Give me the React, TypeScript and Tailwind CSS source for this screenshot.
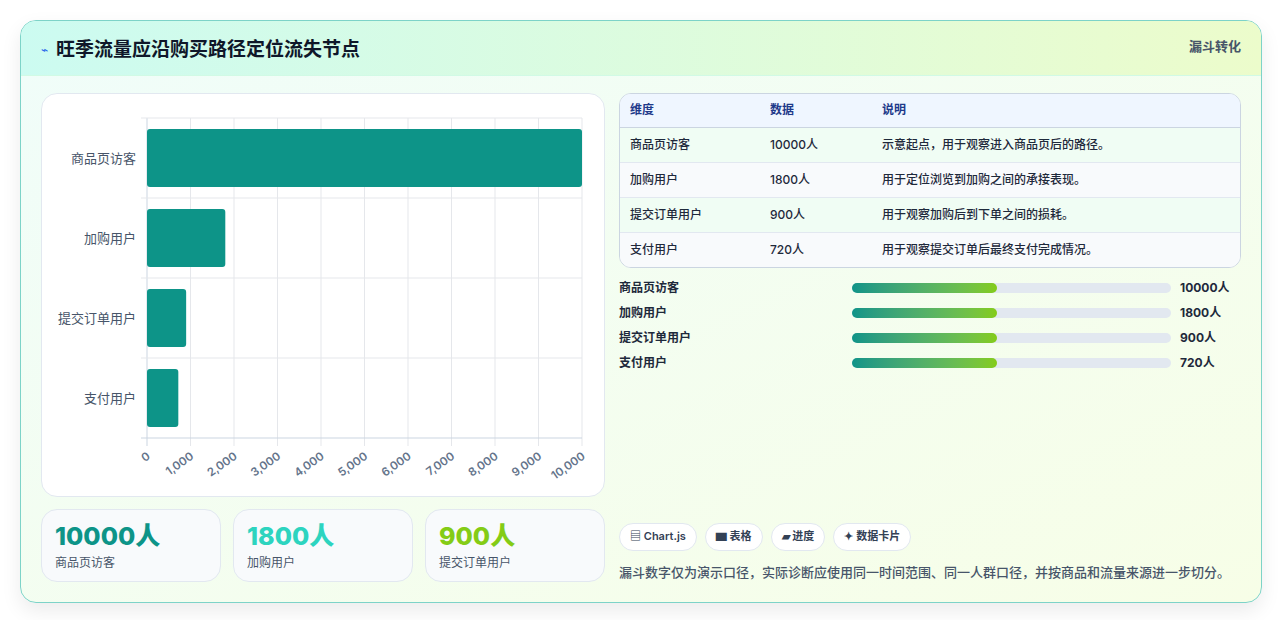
import React from 'react';

const rows = [
  { name: '商品页访客', value: 10000, note: '示意起点，用于观察进入商品页后的路径。' },
  { name: '加购用户', value: 1800, note: '用于定位浏览到加购之间的承接表现。' },
  { name: '提交订单用户', value: 900, note: '用于观察加购后到下单之间的损耗。' },
  { name: '支付用户', value: 720, note: '用于观察提交订单后最终支付完成情况。' },
];

function FunnelChart() {
  const x0 = 105;
  const w = 435;
  const y0 = 24;
  const rowH = 80;
  return (
    <svg width="564" height="404" className="block">
      {Array.from({ length: 11 }).map((_, i) => (
        <line key={i} x1={x0 + (w * i) / 10} x2={x0 + (w * i) / 10} y1={y0} y2={y0 + rowH * 4 + 8} stroke={i === 0 ? '#cbd5e1' : '#e5e7eb'} />
      ))}
      {[0, 1, 2, 3, 4].map((i) => (
        <line key={i} x1={x0 - 6} x2={x0 + w} y1={y0 + rowH * i} y2={y0 + rowH * i} stroke={i === 4 ? '#cbd5e1' : '#e5e7eb'} />
      ))}
      {rows.map((r, i) => (
        <g key={r.name}>
          <rect x={x0} y={y0 + rowH * i + 11} width={(w * r.value) / 10000} height={58} rx={3} fill="#0d9488" />
          <text x={x0 - 11} y={y0 + rowH * i + 45} textAnchor="end" fontSize="13" fill="#475569">{r.name}</text>
        </g>
      ))}
      {Array.from({ length: 11 }).map((_, i) => {
        const x = x0 + (w * i) / 10;
        const label = (i * 1000).toLocaleString('en-US');
        return (
          <text key={i} x={x + 4} y={y0 + rowH * 4 + 20} textAnchor="end" fontSize="11.5" fontWeight="600" fill="#64748b" transform={`rotate(-35 ${x + 4} ${y0 + rowH * 4 + 20})`}>
            {label}
          </text>
        );
      })}
    </svg>
  );
}

export default function App() {
  return (
    <div className="min-h-[620px] bg-white p-5" style={{ fontFamily: 'Inter, "Noto Sans CJK SC", sans-serif' }}>
      <div className="overflow-hidden rounded-2xl border border-[#7dd3c8] bg-gradient-to-br from-[#f0fdfa] to-[#f7fee7] shadow-[0_8px_20px_rgba(0,0,0,0.08)]">
        <div className="flex h-[55px] items-start justify-between border-b border-[#d1fae5] bg-gradient-to-r from-[#ccfbf1] to-[#ecfccb] px-5">
          <div className="mt-[15px] flex items-center gap-2">
            <span className="text-[12px] text-[#2563eb]">⌁</span>
            <h1 className="text-[19px] font-bold text-[#0f172a]">旺季流量应沿购买路径定位流失节点</h1>
          </div>
          <span className="mt-[16px] text-[13px] font-semibold text-[#475569]">漏斗转化</span>
        </div>
        <div className="flex gap-[14px] p-5 pt-[17px]">
          <div className="flex w-[564px] flex-col gap-3">
            <div className="h-[404px] rounded-2xl border border-[#e2e8f0] bg-white">
              <FunnelChart />
            </div>
            <div className="grid grid-cols-3 gap-3">
              {[
                { v: '10000人', l: '商品页访客', c: 'text-[#0d9488]' },
                { v: '1800人', l: '加购用户', c: 'text-[#2dd4bf]' },
                { v: '900人', l: '提交订单用户', c: 'text-[#84cc16]' },
              ].map((s) => (
                <div key={s.l} className="h-[73px] rounded-2xl border border-[#e2e8f0] bg-[#f8fafc] px-[13px] pt-[10px]">
                  <div className={`text-[25px] font-extrabold leading-8 ${s.c}`}>{s.v}</div>
                  <div className="mt-[2px] text-[12px] text-[#475569]">{s.l}</div>
                </div>
              ))}
            </div>
          </div>
          <div className="flex flex-1 flex-col">
            <div className="overflow-hidden rounded-xl border border-[#cbd5e1] bg-white">
              <table className="w-full text-left text-[12px]">
                <thead className="bg-[#eff6ff] text-[#1e3a8a]">
                  <tr className="h-[33px] border-b border-[#cbd5e1]">
                    <th className="w-[150px] pl-[10px] font-semibold">维度</th>
                    <th className="w-[112px] font-semibold">数据</th>
                    <th className="font-semibold">说明</th>
                  </tr>
                </thead>
                <tbody className="font-medium text-[#1e293b]">
                  {rows.map((r, i) => (
                    <tr key={r.name} className={`h-[35px] ${i < 3 ? 'border-b border-[#e2e8f0]' : ''} ${i % 2 === 0 ? 'bg-[#f0fdf4]' : 'bg-[#f8fafc]'}`}>
                      <td className="pl-[10px]">{r.name}</td>
                      <td>{r.value}人</td>
                      <td>{r.note}</td>
                    </tr>
                  ))}
                </tbody>
              </table>
            </div>
            <div className="mt-[11px] flex flex-col gap-[8px]">
              {rows.map((r) => (
                <div key={r.name} className="flex h-[17px] items-center text-[12px] font-semibold text-[#1e293b]">
                  <span className="w-[233px]">{r.name}</span>
                  <div className="h-[10px] w-[319px] rounded-full bg-[#e2e8f0]">
                    <div className="h-full w-[145px] rounded-full bg-gradient-to-r from-[#0d9488] to-[#84cc16]" />
                  </div>
                  <span className="ml-[9px] font-bold">{r.value}人</span>
                </div>
              ))}
            </div>
            <div className="mt-auto">
              <div className="flex gap-2">
                {['▤ Chart.js', '▆ 表格', '▰ 进度', '✦ 数据卡片'].map((t) => (
                  <span key={t} className="flex h-[28px] items-center rounded-full border border-[#e2e8f0] bg-white px-[10px] text-[11px] font-semibold text-[#334155]">{t}</span>
                ))}
              </div>
              <p className="mt-[12px] text-[13px] font-medium text-[#475569]">漏斗数字仅为演示口径，实际诊断应使用同一时间范围、同一人群口径，并按商品和流量来源进一步切分。</p>
            </div>
          </div>
        </div>
      </div>
    </div>
  );
}
